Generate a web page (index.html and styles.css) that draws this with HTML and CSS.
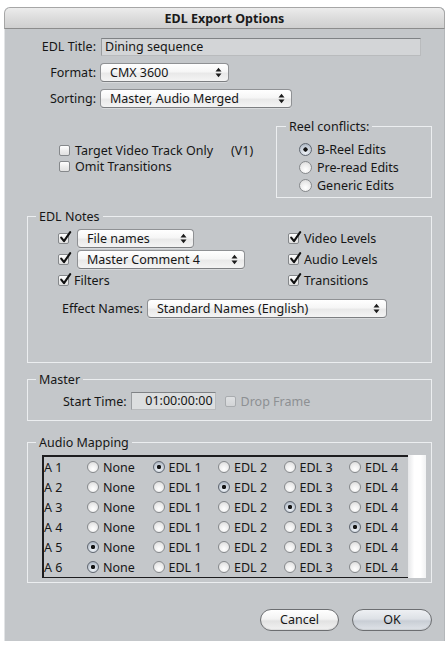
FILE: index.html
```html
<!DOCTYPE html>
<html>
<head>
<meta charset="utf-8">
<link rel="stylesheet" href="styles.css">
</head>
<body>
<div class="window">
  <div class="titlebar">EDL Export Options</div>
  <div class="content">
    <div class="form">
      <span class="lbl">EDL Title:</span>
      <div class="textfield title-field">Dining sequence</div>
      <span class="lbl">Format:</span>
      <div class="popup w-format"><span class="ptext">CMX 3600</span><svg class="arrows" width="7" height="11" viewBox="0 0 7 11"><path d="M0.5 4.5 L3.5 0.8 L6.5 4.5 Z M0.5 6.5 L3.5 10.2 L6.5 6.5 Z" fill="#1c1c1c"/></svg></div>
      <span class="lbl">Sorting:</span>
      <div class="popup w-sorting"><span class="ptext">Master, Audio Merged</span><svg class="arrows" width="7" height="11" viewBox="0 0 7 11"><path d="M0.5 4.5 L3.5 0.8 L6.5 4.5 Z M0.5 6.5 L3.5 10.2 L6.5 6.5 Z" fill="#1c1c1c"/></svg></div>
    </div>

    <div class="options">
      <div class="checks">
        <div class="line"><span class="cb"></span><span>Target Video Track Only</span><span class="v1">(V1)</span></div>
        <div class="line"><span class="cb"></span><span>Omit Transitions</span></div>
      </div>
      <fieldset class="group reel">
        <legend>Reel conflicts:</legend>
        <div class="radios">
          <div class="line"><span class="rb on"></span><span>B-Reel Edits</span></div>
          <div class="line"><span class="rb"></span><span>Pre-read Edits</span></div>
          <div class="line"><span class="rb"></span><span>Generic Edits</span></div>
        </div>
      </fieldset>
    </div>

    <fieldset class="group notes">
      <legend>EDL Notes</legend>
      <div class="notes-grid">
        <div class="cell cell-pop"><span class="cb on"><svg class="tick" width="13" height="13" viewBox="0 0 13 13"><path d="M2.2 6.6 L5 10.2 L11.2 1.2" fill="none" stroke="#111" stroke-width="2.1" stroke-linecap="round" stroke-linejoin="round"/></svg></span><div class="popup w-file"><span class="ptext">File names</span><svg class="arrows" width="7" height="11" viewBox="0 0 7 11"><path d="M0.5 4.5 L3.5 0.8 L6.5 4.5 Z M0.5 6.5 L3.5 10.2 L6.5 6.5 Z" fill="#1c1c1c"/></svg></div></div>
        <div class="cell"><span class="cb on"><svg class="tick" width="13" height="13" viewBox="0 0 13 13"><path d="M2.2 6.6 L5 10.2 L11.2 1.2" fill="none" stroke="#111" stroke-width="2.1" stroke-linecap="round" stroke-linejoin="round"/></svg></span><span>Video Levels</span></div>
        <div class="cell cell-pop"><span class="cb on"><svg class="tick" width="13" height="13" viewBox="0 0 13 13"><path d="M2.2 6.6 L5 10.2 L11.2 1.2" fill="none" stroke="#111" stroke-width="2.1" stroke-linecap="round" stroke-linejoin="round"/></svg></span><div class="popup w-comment"><span class="ptext">Master Comment 4</span><svg class="arrows" width="7" height="11" viewBox="0 0 7 11"><path d="M0.5 4.5 L3.5 0.8 L6.5 4.5 Z M0.5 6.5 L3.5 10.2 L6.5 6.5 Z" fill="#1c1c1c"/></svg></div></div>
        <div class="cell"><span class="cb on"><svg class="tick" width="13" height="13" viewBox="0 0 13 13"><path d="M2.2 6.6 L5 10.2 L11.2 1.2" fill="none" stroke="#111" stroke-width="2.1" stroke-linecap="round" stroke-linejoin="round"/></svg></span><span>Audio Levels</span></div>
        <div class="cell"><span class="cb on"><svg class="tick" width="13" height="13" viewBox="0 0 13 13"><path d="M2.2 6.6 L5 10.2 L11.2 1.2" fill="none" stroke="#111" stroke-width="2.1" stroke-linecap="round" stroke-linejoin="round"/></svg></span><span>Filters</span></div>
        <div class="cell"><span class="cb on"><svg class="tick" width="13" height="13" viewBox="0 0 13 13"><path d="M2.2 6.6 L5 10.2 L11.2 1.2" fill="none" stroke="#111" stroke-width="2.1" stroke-linecap="round" stroke-linejoin="round"/></svg></span><span>Transitions</span></div>
      </div>
      <div class="effect-row">
        <span>Effect Names:</span>
        <div class="popup w-effect"><span class="ptext">Standard Names (English)</span><svg class="arrows" width="7" height="11" viewBox="0 0 7 11"><path d="M0.5 4.5 L3.5 0.8 L6.5 4.5 Z M0.5 6.5 L3.5 10.2 L6.5 6.5 Z" fill="#1c1c1c"/></svg></div>
      </div>
    </fieldset>

    <fieldset class="group master">
      <legend>Master</legend>
      <div class="master-row">
        <span>Start Time:</span>
        <div class="textfield time-field">01:00:00:00</div>
        <span class="cb disabled"></span>
        <span class="dim">Drop Frame</span>
      </div>
    </fieldset>

    <fieldset class="group audio">
      <legend>Audio Mapping</legend>
      <div class="mapping">
        <div class="list">
          <div class="row"><span class="trk">A 1</span><span class="opt"><span class="rb sm"></span>None</span><span class="opt"><span class="rb sm on"></span>EDL 1</span><span class="opt"><span class="rb sm"></span>EDL 2</span><span class="opt"><span class="rb sm"></span>EDL 3</span><span class="opt"><span class="rb sm"></span>EDL 4</span></div>
          <div class="row"><span class="trk">A 2</span><span class="opt"><span class="rb sm"></span>None</span><span class="opt"><span class="rb sm"></span>EDL 1</span><span class="opt"><span class="rb sm on"></span>EDL 2</span><span class="opt"><span class="rb sm"></span>EDL 3</span><span class="opt"><span class="rb sm"></span>EDL 4</span></div>
          <div class="row"><span class="trk">A 3</span><span class="opt"><span class="rb sm"></span>None</span><span class="opt"><span class="rb sm"></span>EDL 1</span><span class="opt"><span class="rb sm"></span>EDL 2</span><span class="opt"><span class="rb sm on"></span>EDL 3</span><span class="opt"><span class="rb sm"></span>EDL 4</span></div>
          <div class="row"><span class="trk">A 4</span><span class="opt"><span class="rb sm"></span>None</span><span class="opt"><span class="rb sm"></span>EDL 1</span><span class="opt"><span class="rb sm"></span>EDL 2</span><span class="opt"><span class="rb sm"></span>EDL 3</span><span class="opt"><span class="rb sm on"></span>EDL 4</span></div>
          <div class="row"><span class="trk">A 5</span><span class="opt"><span class="rb sm on"></span>None</span><span class="opt"><span class="rb sm"></span>EDL 1</span><span class="opt"><span class="rb sm"></span>EDL 2</span><span class="opt"><span class="rb sm"></span>EDL 3</span><span class="opt"><span class="rb sm"></span>EDL 4</span></div>
          <div class="row"><span class="trk">A 6</span><span class="opt"><span class="rb sm on"></span>None</span><span class="opt"><span class="rb sm"></span>EDL 1</span><span class="opt"><span class="rb sm"></span>EDL 2</span><span class="opt"><span class="rb sm"></span>EDL 3</span><span class="opt"><span class="rb sm"></span>EDL 4</span></div>
        </div>
        <div class="strip"></div>
      </div>
    </fieldset>

    <div class="buttons">
      <div class="btn cancel">Cancel</div>
      <div class="btn ok">OK</div>
    </div>
  </div>
</div>
</body>
</html>
```

FILE: styles.css
```css
* { box-sizing: border-box; }

body {
  margin: 0;
  background: #ffffff;
  font-family: "Noto Sans", "DejaVu Sans", sans-serif;
  font-size: 12.5px;
  color: #161616;
}

.window {
  margin: 7px 0 0 4px;
  width: 441px;
  height: 634px;
  background: #c4c7ca;
  border-radius: 6px 6px 0 0;
  overflow: hidden;
  box-shadow: inset 1px 0 0 #e2e4e6, inset -1px 0 0 #b4b7ba;
}

.titlebar {
  height: 22px;
  line-height: 21px;
  text-align: center;
  font-weight: bold;
  font-size: 12.5px;
  color: #1a1a1a;
  background: linear-gradient(#ececec, #dcdcdc 50%, #cfcfcf);
  border: 1px solid #a6a6a6;
  border-bottom-color: #8c8c8c;
  border-radius: 6px 6px 0 0;
}

.content {
  padding: 9px 13px 0 23px;
}

/* top form */
.form {
  display: grid;
  grid-template-columns: 69px auto;
  column-gap: 4px;
  row-gap: 7px;
  align-items: center;
  justify-items: start;
}
.lbl { justify-self: end; line-height: 16px; }

.textfield {
  height: 18px;
  line-height: 16px;
  padding: 0 3px;
  background: #d3d5d7;
  border: 1px solid #b9bbbd;
  border-top-color: #7f8285;
  border-left-color: #9a9da0;
}
.title-field { width: 320px; margin-left: 1px; }

.popup {
  position: relative;
  height: 19px;
  line-height: 17px;
  padding-left: 9px;
  border: 1px solid #8f9194;
  border-bottom-color: #7c7e81;
  border-radius: 4px;
  background: linear-gradient(#ffffff, #f6f6f6 45%, #e9e9e9 55%, #f4f4f4);
  box-shadow: 0 1px 0 rgba(255,255,255,0.35);
}
.popup .arrows {
  position: absolute;
  right: 6px;
  top: 3px;
}
.w-format { width: 129px; }
.w-sorting { width: 192px; }
.w-file { width: 117px; }
.w-comment { width: 168px; }
.w-effect { width: 240px; }

/* check box & radio */
.line { display: flex; align-items: center; }

.cb {
  position: relative;
  flex: none;
  width: 11px;
  height: 11px;
  border: 1px solid #85888b;
  border-radius: 2px;
  background: linear-gradient(#ffffff, #ececec 55%, #e1e1e1);
}
.cb .tick {
  position: absolute;
  left: 0px;
  top: -3px;
}
.cb.disabled {
  border-color: #a9acaf;
  background: linear-gradient(#dfe1e3, #d2d4d6);
}

.rb {
  flex: none;
  width: 13px;
  height: 13px;
  border-radius: 50%;
  border: 1px solid #86898c;
  background: radial-gradient(circle at 50% 70%, #ffffff, #efefef 45%, #d6d6d6);
}
.rb.on {
  border-color: #5f6670;
  background: radial-gradient(circle at 50% 50%, #151515 0 1.9px, transparent 2.4px),
              radial-gradient(circle at 50% 75%, #eef2f7, #c4ccd6 60%, #9aa5b2);
}
.rb.sm { width: 12px; height: 12px; }

/* options row */
.options {
  display: flex;
  align-items: flex-start;
  margin-top: 11px;
}
.checks {
  margin: 23px 0 0 32px;
}
.checks .line { height: 16px; gap: 5px; }
.checks .v1 { margin-left: 13px; }

.group {
  margin: 0;
  padding: 0;
  min-width: 0;
  border: 1px solid #eceef0;
}
.group legend {
  margin-left: 8px;
  padding: 0 3px;
  line-height: 15px;
}

.reel {
  margin-left: auto;
  width: 156px;
}
.reel legend { margin-left: 9px; }
.radios { padding: 6px 0 3px 22px; }
.radios .line { height: 18px; gap: 5px; }

/* notes */
.notes { margin-top: 11px; padding-bottom: 44px; }
.notes-grid {
  display: grid;
  grid-template-columns: 230px auto;
  grid-template-rows: 21px 21px 20px;
  margin: 4px 0 0 30px;
}
.cell { display: flex; align-items: center; gap: 5px; }
.cell-pop { gap: 8px; }

.effect-row {
  display: flex;
  align-items: center;
  gap: 4px;
  margin-top: 9px;
  padding-left: 34px;
}

/* master */
.master { margin-top: 9px; padding-bottom: 10px; }
.master-row {
  display: flex;
  align-items: center;
  margin-top: 5px;
  padding-left: 35px;
}
.time-field {
  width: 85px;
  margin-left: 4px;
  text-align: right;
  padding-right: 2px;
  background: #dcdedf;
}
.master-row .cb { margin-left: 9px; }
.dim { color: #8d9093; margin-left: 5px; }

/* audio */
.audio { margin-top: 14px; padding-bottom: 4px; }
.mapping {
  display: flex;
  margin: 5px 5px 0 14px;
}
.list {
  flex: 1;
  border-top: 2px solid #1d1d1f;
  border-left: 2px solid #1d1d1f;
  border-bottom: 1px solid #1d1d1f;
}
.row {
  display: grid;
  grid-template-columns: 43px repeat(4, 65.5px) 1fr;
  align-items: center;
  height: 20px;
}
.trk { padding-left: 0; }
.opt { display: flex; align-items: center; gap: 4px; }
.strip {
  width: 18px;
  background: linear-gradient(90deg, #e6e7e9, #ffffff 35%, #ffffff 70%, #f1f2f3);
}

/* buttons */
.buttons {
  display: flex;
  justify-content: flex-end;
  gap: 13px;
  margin-top: 26px;
}
.btn {
  height: 22px;
  line-height: 20px;
  text-align: center;
  border: 1px solid #6c6e71;
  border-radius: 11px;
  background: linear-gradient(#ffffff, #f3f3f3 45%, #e2e2e2 55%, #f2f2f2);
  box-shadow: inset 0 -1px 1px rgba(0,0,0,0.08);
}
.cancel { width: 79px; }
.ok {
  width: 80px;
  background: linear-gradient(#eef0f3, #dde1e6 45%, #c9ced5 55%, #dfe3e8);
}
```
